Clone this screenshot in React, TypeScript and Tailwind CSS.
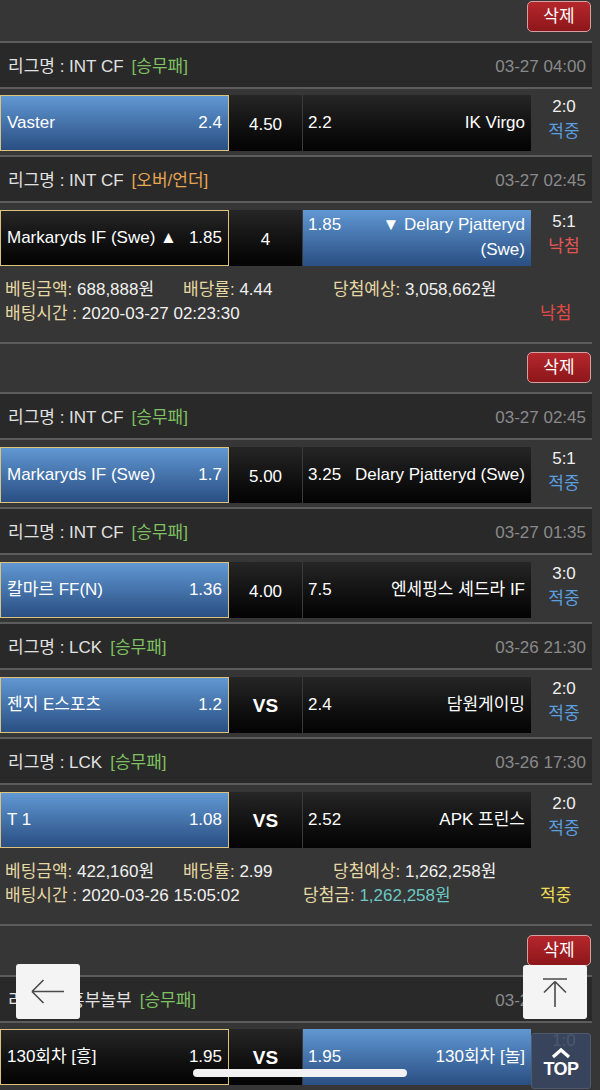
import React from "react";

const FONT = "font-['Liberation_Sans','Noto_Sans_CJK_KR',sans-serif]";

function Line() {
  return <div className="h-[2px] w-[592px] bg-[#5c5c5c]" />;
}

function DeleteBar({ top = 9 }: { top?: number }) {
  return (
    <div className={`flex w-[592px] justify-end pr-[1px] pb-[9px] ${top === 1 ? "pt-[1px]" : top === 8 ? "pt-[8px]" : "pt-[9px]"}`}>
      <div className="flex h-[31px] w-[64px] items-center justify-center rounded-[5px] border border-[#d6a0a0] bg-linear-to-b from-[#b5272c] to-[#8d161a] text-[17px] text-white">
        삭제
      </div>
    </div>
  );
}

function Header({
  league,
  type,
  orange,
  time,
}: {
  league: string;
  type: string;
  orange?: boolean;
  time: string;
}) {
  return (
    <div className="flex h-[44px] w-[592px] items-center justify-between bg-[#292929] pl-[8px] pr-[6px] pt-[4px] text-[17px]">
      <div className="text-[#e2e2e2]">
        리그명 : {league}
        <span className={`ml-[8px] ${orange ? "text-[#e8a552]" : "text-[#7fc061]"}`}>[{type}]</span>
      </div>
      <div className="text-[#8a8a8a]">{time}</div>
    </div>
  );
}

type Side = { name: React.ReactNode; odds: string; blue: boolean; gold: boolean };

function cellBg(blue: boolean) {
  return blue
    ? "bg-linear-to-b from-[#6198d3] to-[#2a4f83]"
    : "bg-linear-to-b from-[#262626] to-[#040404]";
}

function Match({
  left,
  mid,
  vs,
  right,
  rightTop,
  score,
  result,
  lose,
  pt = 7,
  pb = 4,
}: {
  left: Side;
  mid: string;
  vs?: boolean;
  right: Side;
  rightTop?: boolean;
  score: string;
  result?: string;
  lose?: boolean;
  pt?: number;
  pb?: number;
}) {
  return (
    <div className={`flex w-[600px] ${pt === 6 ? "pt-[6px]" : "pt-[7px]"} ${pb === 0 ? "pb-0" : "pb-[4px]"}`}>
      <div
        className={`flex h-[56px] w-[229px] items-center justify-between px-[6px] text-[17px] text-white ${cellBg(left.blue)} ${
          left.gold ? "border border-[#dcc27a]" : ""
        }`}
      >
        <span>{left.name}</span>
        <span>{left.odds}</span>
      </div>
      <div
        className={`flex h-[56px] w-[73px] items-center justify-center pt-[3px] text-white ${cellBg(false)} ${
          vs ? "text-[19px] font-bold" : "text-[17px]"
        }`}
      >
        {mid}
      </div>
      <div className="h-[56px] w-[1px] bg-[#3a3a3a]" />
      <div
        className={`flex h-[56px] w-[228px] justify-between pl-[5px] pr-[6px] text-[17px] text-white ${cellBg(right.blue)} ${
          rightTop ? "items-start pt-[2px] leading-[25px]" : "items-center"
        } ${right.gold ? "border border-[#dcc27a]" : ""}`}
      >
        <span>{right.odds}</span>
        <span className="text-right">{right.name}</span>
      </div>
      <div className="-mt-[1px] flex flex-1 flex-col items-center pr-[3px] text-[17px] leading-[25px]">
        <span className="text-[#f0f0f0]">{score}</span>
        {result && <span className={lose ? "text-[#e25555]" : "text-[#5a9fe0]"}>{result}</span>}
      </div>
    </div>
  );
}

function L({ children }: { children: React.ReactNode }) {
  return <span className="text-[#e6d8a3]">{children}</span>;
}

function Info({
  amount,
  rate,
  expect,
  time,
  win,
}: {
  amount: string;
  rate: string;
  expect: string;
  time: string;
  win?: string;
}) {
  return (
    <div className="w-[592px] pb-[16px] pl-[5px] pt-[12px] text-[17px] leading-[24px] text-[#f0f0f0]">
      <div className="flex">
        <div className="w-[178px]">
          <L>베팅금액:</L> {amount}
        </div>
        <div className="w-[150px]">
          <L>배당률:</L> {rate}
        </div>
        <div>
          <L>당첨예상:</L> {expect}
        </div>
      </div>
      <div className="flex">
        <div className="w-[298px]">
          <L>배팅시간 :</L> {time}
        </div>
        <div className="w-[237px]">
          {win && (
            <>
              <L>당첨금:</L> <span className="text-[#6cc8c4]">{win}</span>
            </>
          )}
        </div>
        <div className={win ? "text-[#f0df55]" : "text-[#e24a44]"}>{win ? "적중" : "낙첨"}</div>
      </div>
    </div>
  );
}

export default function App() {
  const blueGold = (name: React.ReactNode, odds: string): Side => ({ name, odds, blue: true, gold: true });
  const dark = (name: React.ReactNode, odds: string): Side => ({ name, odds, blue: false, gold: false });

  return (
    <div className={`relative h-[1090px] w-[600px] overflow-hidden bg-[#363636] ${FONT}`}>
      <DeleteBar top={1} />
      <Line />
      <Header league="INT CF" type="승무패" time="03-27 04:00" />
      <Line />
      <Match pt={6} left={blueGold("Vaster", "2.4")} mid="4.50" right={dark("IK Virgo", "2.2")} score="2:0" result="적중" />
      <Line />
      <Header league="INT CF" type="오버/언더" orange time="03-27 02:45" />
      <Line />
      <Match
        pb={0}
        left={{ name: "Markaryds IF (Swe) ▲", odds: "1.85", blue: false, gold: true }}
        mid="4"
        rightTop
        right={{
          name: (
            <>
              ▼ Delary Pjatteryd
              <br />
              (Swe)
            </>
          ),
          odds: "1.85",
          blue: true,
          gold: false,
        }}
        score="5:1"
        result="낙첨"
        lose
      />
      <Info amount="688,888원" rate="4.44" expect="3,058,662원" time="2020-03-27 02:23:30" />
      <Line />
      <DeleteBar top={8} />
      <Line />
      <Header league="INT CF" type="승무패" time="03-27 02:45" />
      <Line />
      <Match
        left={blueGold("Markaryds IF (Swe)", "1.7")}
        mid="5.00"
        right={dark("Delary Pjatteryd (Swe)", "3.25")}
        score="5:1"
        result="적중"
      />
      <Line />
      <Header league="INT CF" type="승무패" time="03-27 01:35" />
      <Line />
      <Match left={blueGold("칼마르 FF(N)", "1.36")} mid="4.00" right={dark("엔세핑스 셰드라 IF", "7.5")} score="3:0" result="적중" />
      <Line />
      <Header league="LCK" type="승무패" time="03-26 21:30" />
      <Line />
      <Match left={blueGold("젠지 E스포츠", "1.2")} mid="VS" vs right={dark("담원게이밍", "2.4")} score="2:0" result="적중" />
      <Line />
      <Header league="LCK" type="승무패" time="03-26 17:30" />
      <Line />
      <Match pb={0} left={blueGold("T 1", "1.08")} mid="VS" vs right={dark("APK 프린스", "2.52")} score="2:0" result="적중" />
      <Info amount="422,160원" rate="2.99" expect="1,262,258원" time="2020-03-26 15:05:02" win="1,262,258원" />
      <Line />
      <DeleteBar />
      <Line />
      <Header league="흥부놀부" type="승무패" time="03-25 01:10" />
      <Line />
      <Match
        pt={6}
        left={{ name: "130회차 [흥]", odds: "1.95", blue: false, gold: true }}
        mid="VS"
        vs
        right={{ name: "130회차 [놀]", odds: "1.95", blue: true, gold: false }}
        score="1:0"
      />

      {/* back button overlay */}
      <div className="absolute left-[16px] top-[964px] flex h-[55px] w-[64px] items-center justify-center rounded-[3px] bg-[#f4f4f4]">
        <svg width="64" height="55" viewBox="0 0 64 55">
          <path d="M16 27.5 H48 M16 27.5 L27.5 16 M16 27.5 L27.5 39" stroke="#4a4a4a" strokeWidth="1.6" fill="none" />
        </svg>
      </div>

      {/* scroll to top overlay */}
      <div className="absolute left-[523px] top-[965px] flex h-[54px] w-[64px] items-center justify-center rounded-[3px] bg-[#f4f4f4]">
        <svg width="64" height="54" viewBox="0 0 64 54">
          <path d="M20 14 H44 M32 16.5 V42 M32 16.5 L21 27.5 M32 16.5 L43 27.5" stroke="#4a4a4a" strokeWidth="1.6" fill="none" />
        </svg>
      </div>

      {/* TOP button */}
      <div className="absolute left-[531px] top-[1033px] flex h-[56px] w-[60px] flex-col items-center rounded-[3px] border border-[#4f5a6e] bg-[#394660]/90 pt-[13px]">
        <svg width="22" height="12" viewBox="0 0 22 12">
          <path d="M3 10 L11 3 L19 10" stroke="#ffffff" strokeWidth="3.2" fill="none" strokeLinejoin="miter" />
        </svg>
        <span className="text-[18px] font-bold leading-[20px] tracking-[-0.5px] text-white">TOP</span>
      </div>

      {/* home indicator */}
      <div className="absolute left-[193px] top-[1069px] h-[8px] w-[214px] rounded-full bg-[#f2f2f2]" />
    </div>
  );
}
